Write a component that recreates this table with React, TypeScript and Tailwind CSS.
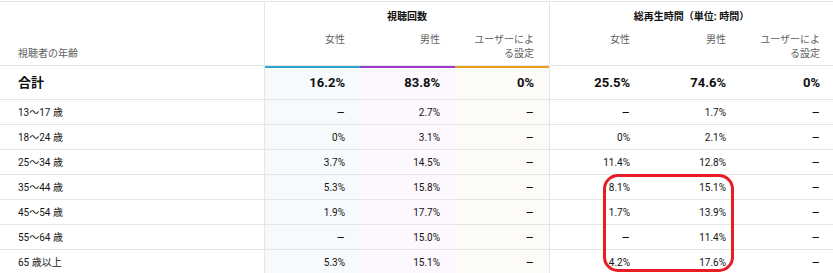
import React from "react";

const font = { fontFamily: 'Roboto, "Noto Sans CJK JP", sans-serif' };

const rows = [
  ["13〜17 歳", "–", "2.7%", "–", "–", "1.7%", "–"],
  ["18〜24 歳", "0%", "3.1%", "–", "0%", "2.1%", "–"],
  ["25〜34 歳", "3.7%", "14.5%", "–", "11.4%", "12.8%", "–"],
  ["35〜44 歳", "5.3%", "15.8%", "–", "8.1%", "15.1%", "–"],
  ["45〜54 歳", "1.9%", "17.7%", "–", "1.7%", "13.9%", "–"],
  ["55〜64 歳", "–", "15.0%", "–", "–", "11.4%", "–"],
  ["65 歳以上", "5.3%", "15.1%", "–", "4.2%", "17.6%", "–"],
];

const totals = ["16.2%", "83.8%", "0%", "25.5%", "74.6%", "0%"];

const grid = "grid grid-cols-[265px_95px_95px_95px_95px_95px_1fr]";

// cell classes per value column (index 0..5)
const cellCls = [
  "bg-[#f7fafc] pr-[15px]",
  "bg-[#fcf8fd] pr-[15px]",
  "bg-[#fcfbf7] pr-[15px] border-r border-[#e5e5e5]",
  "pr-[15px]",
  "pr-[14px]",
  "pr-[13px]",
];

export default function App() {
  return (
    <div className="relative w-[833px] overflow-hidden bg-white pt-[1px]" style={font}>
      <div className="border-t border-[#e5e5e5]">
        {/* header */}
        <div className={`${grid} grid-rows-[28px_35px] border-b border-[#e5e5e5]`}>
          <div className="row-span-2 flex items-end border-r border-[#e5e5e5] pb-[4px] pl-[18px] text-[10px] leading-[14px] text-[#606060]">
            視聴者の年齢
          </div>
          <div className="col-span-3 flex items-center justify-center border-r border-[#e5e5e5] text-[10px] font-bold text-[#0f0f0f]">
            視聴回数
          </div>
          <div className="col-span-3 flex items-center justify-center text-[10px] font-bold text-[#0f0f0f]">
            総再生時間（単位: 時間）
          </div>
          {["女性", "男性", "ユーザーによ|る設定", "女性", "男性", "ユーザーによ|る設定"].map((h, i) => (
            <div
              key={i}
              className={`pt-[3px] text-right text-[10px] leading-[14px] text-[#606060] ${
                i === 2 ? "border-r border-[#e5e5e5]" : ""
              } ${i === 4 ? "pr-[14px]" : i === 5 ? "pr-[13px]" : "pr-[15px]"}`}
            >
              {h.split("|").map((p) => (
                <div key={p}>{p}</div>
              ))}
            </div>
          ))}
        </div>

        {/* total row */}
        <div className={`${grid} h-[34px] border-b border-[#e5e5e5]`}>
          <div className="flex items-center border-r border-[#e5e5e5] pl-[18px] text-[13px] font-bold text-[#0f0f0f]">
            合計
          </div>
          {totals.map((t, i) => (
            <div key={i} className={`relative flex items-center justify-end text-[13px] font-bold text-[#0f0f0f] ${cellCls[i]}`}>
              {i === 0 && <div className="absolute left-0 right-0 top-0 h-[2px] bg-[#2ba6cf]" />}
              {i === 1 && <div className="absolute left-0 right-0 top-0 h-[2px] bg-[#9b3bcb]" />}
              {i === 2 && <div className="absolute left-0 right-0 top-0 h-[2px] bg-[#e8a11e]" />}
              {t}
            </div>
          ))}
        </div>

        {/* data rows */}
        {rows.map((r) => (
          <div key={r[0]} className={`${grid} h-[25px] border-b border-[#e5e5e5]`}>
            <div className="flex items-center border-r border-[#e5e5e5] pl-[18px] text-[10px] text-[#131313]">
              {r[0]}
            </div>
            {r.slice(1).map((v, i) => (
              <div key={i} className={`flex items-center justify-end text-[10px] text-[#131313] ${cellCls[i]}`}>
                {v === "–" ? <span className="text-[13px] leading-none text-[#0f0f0f]">–</span> : v}
              </div>
            ))}
          </div>
        ))}
      </div>

      {/* highlight */}
      <div className="absolute left-[603px] top-[174px] h-[98px] w-[131px] rounded-[15px] border-[3px] border-[#e81c24]" />
    </div>
  );
}
